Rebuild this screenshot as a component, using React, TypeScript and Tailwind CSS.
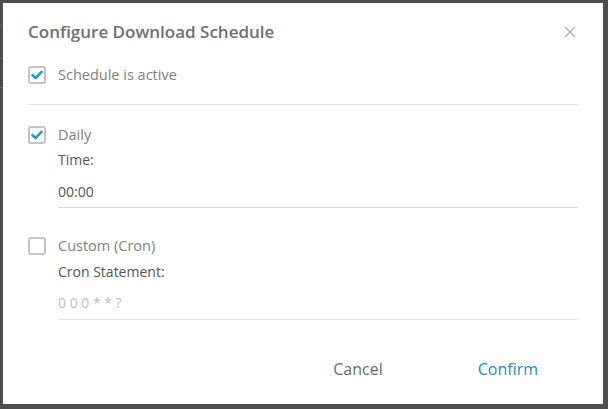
import React, { useState } from "react";

const Check: React.FC<{ checked: boolean; onChange: () => void }> = ({ checked, onChange }) => (
  <button
    type="button"
    onClick={onChange}
    className="w-[18px] h-[18px] rounded-[3px] border-2 border-[#c4c4c4] bg-white flex items-center justify-center shrink-0"
  >
    {checked && (
      <svg width="12" height="10" viewBox="0 0 12 10">
        <path d="M1.5 5.2 L4.6 8 L10.5 1.8" fill="none" stroke="#2a9ac2" strokeWidth="2.6" strokeLinecap="round" strokeLinejoin="round" />
      </svg>
    )}
  </button>
);

const App: React.FC = () => {
  const [active, setActive] = useState(true);
  const [daily, setDaily] = useState(true);
  const [custom, setCustom] = useState(false);
  const [time, setTime] = useState("00:00");
  const [cron, setCron] = useState("");

  return (
    <div className="w-[608px] h-[409px] bg-[#4d4d4d] relative overflow-hidden" style={{ fontFamily: '"Open Sans", "Liberation Sans", sans-serif' }}>
      <div className="absolute left-0 top-[25px] w-[3px] h-px bg-[#6a6a6a]" />
      <div className="absolute left-0 top-[58px] w-[3px] h-px bg-[#6a6a6a]" />
      <div className="absolute left-0 top-[87px] w-[3px] h-px bg-[#6a6a6a]" />

      <div className="absolute left-[3px] top-[3px] w-[600px] h-[401px] bg-white flex flex-col pl-[25px] pr-[25px]">
        <div className="flex items-center justify-between pt-[17px]">
          <h2 className="text-[17px] leading-[24px] font-semibold text-[#6f6f6f]">Configure Download Schedule</h2>
          <button type="button" className="mr-[2px]">
            <svg width="12" height="12" viewBox="0 0 12 12">
              <path d="M1 1 L11 11 M11 1 L1 11" stroke="#a8a8a8" strokeWidth="1.1" />
            </svg>
          </button>
        </div>

        <label className="flex items-center gap-[12px] mt-[19px] h-[24px]">
          <Check checked={active} onChange={() => setActive(!active)} />
          <span className="text-[14.5px] text-[#808080]">Schedule is active</span>
        </label>

        <div className="h-px bg-[#e2e2e2] mt-[17px]" />

        <label className="flex items-center gap-[12px] mt-[18px] h-[24px]">
          <Check checked={daily} onChange={() => setDaily(!daily)} />
          <span className="text-[14.5px] text-[#808080]">Daily</span>
        </label>
        <div className="pl-[30px] flex flex-col">
          <div className="text-[14px] leading-[20px] text-[#555] mt-[3px]">Time:</div>
          <input
            value={time}
            onChange={(e) => setTime(e.target.value)}
            className="mt-[12px] text-[14px] leading-[20px] text-[#555] pb-[5px] border-b border-[#dcdcdc] outline-none"
          />
        </div>

        <label className="flex items-center gap-[12px] mt-[26px] h-[24px]">
          <Check checked={custom} onChange={() => setCustom(!custom)} />
          <span className="text-[14.5px] text-[#808080]">Custom (Cron)</span>
        </label>
        <div className="pl-[30px] flex flex-col">
          <div className="text-[14px] leading-[20px] text-[#555] mt-[4px]">Cron Statement:</div>
          <input
            value={cron}
            placeholder="0 0 0 * * ?"
            onChange={(e) => setCron(e.target.value)}
            className="mt-[11px] text-[14px] leading-[20px] text-[#555] placeholder:text-[#bdbdbd] pb-[6px] border-b border-[#e6e6e6] outline-none"
          />
        </div>

        <div className="flex justify-end items-center mt-auto mb-[23px] gap-[95px] pr-[40px]">
          <button type="button" className="text-[16px] leading-[24px] text-[#6b6b6b]">Cancel</button>
          <button type="button" className="text-[16px] leading-[24px] text-[#1b8fbb]">Confirm</button>
        </div>
      </div>
    </div>
  );
};

export default App;
